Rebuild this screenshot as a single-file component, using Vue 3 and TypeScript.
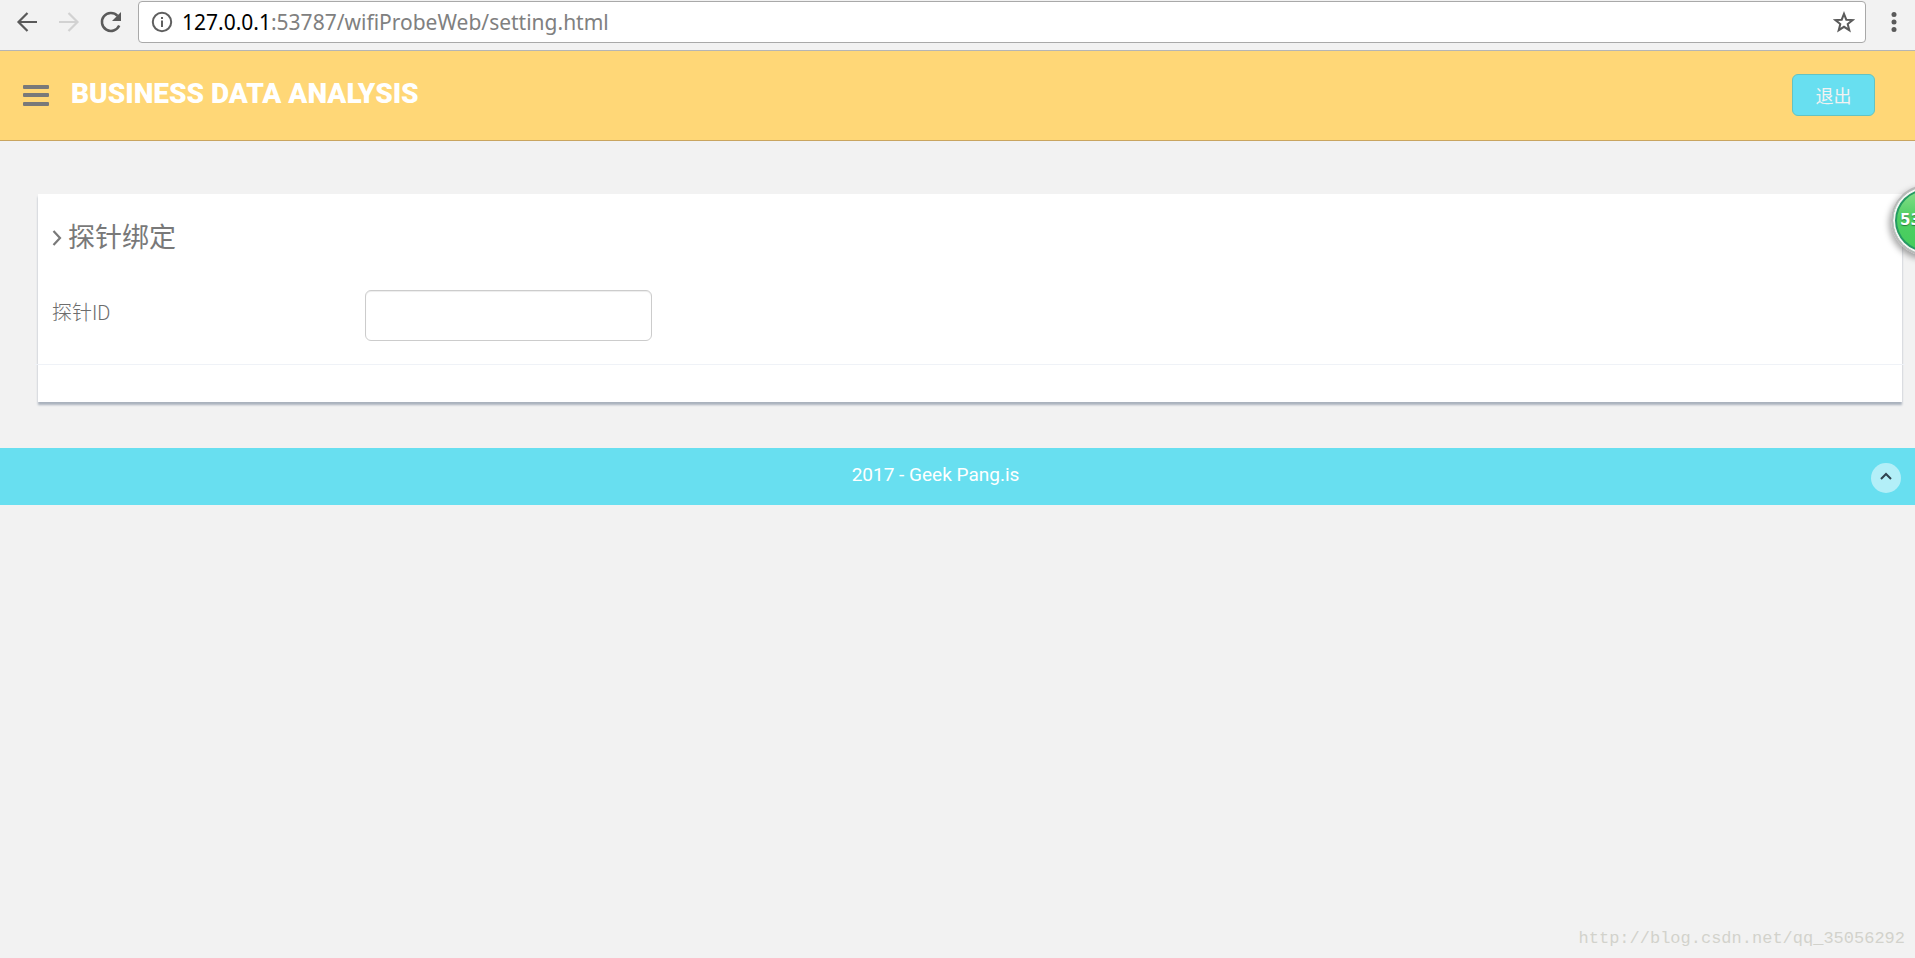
<script setup lang="ts">
import { ref } from 'vue'

const host = '127.0.0.1'
const path = ':53787/wifiProbeWeb/setting.html'
const probeId = ref('')

function scrollToTop(): void {
  window.scrollTo({ top: 0 })
}
</script>

<template>
  <div class="screen">
    <div class="toolbar">
      <button class="tool" type="button" aria-label="Back">
        <svg width="24" height="24" viewBox="0 0 24 24"><path d="M22 12H4M12.5 3L3.5 12l9 9" fill="none" stroke="#5a5a5a" stroke-width="2.2" /></svg>
      </button>
      <button class="tool" type="button" aria-label="Forward">
        <svg width="24" height="24" viewBox="0 0 24 24"><path d="M2 12h18M11.500 3l9 9-9 9" fill="none" stroke="#d2d2d2" stroke-width="2.2" /></svg>
      </button>
      <button class="tool" type="button" aria-label="Reload">
        <svg width="24" height="24" viewBox="0 0 24 24">
          <path d="M20.200 15.500A9 9 0 1 1 18.500 5.800" fill="none" stroke="#5a5a5a" stroke-width="2.500" />
          <path d="M22 2v9h-9z" fill="#5a5a5a" />
        </svg>
      </button>
      <div class="address">
        <svg class="info" width="22" height="22" viewBox="0 0 22 22">
          <circle cx="11" cy="11" r="9.200" fill="none" stroke="#5f5f5f" stroke-width="2" />
          <path d="M10 9.500h2V16h-2zM10 6h2v2h-2z" fill="#5f5f5f" />
        </svg>
        <span class="url"><span class="host">{{ host }}</span>{{ path }}</span>
        <button class="star" type="button" aria-label="Bookmark">
          <svg width="22" height="22" viewBox="0 0 22 22"><path d="M11 2.800l2.300 5.900 6.300.4-4.900 4 1.600 6.100-5.300-3.400-5.300 3.400 1.600-6.100-4.900-4 6.300-.4z" fill="none" stroke="#5a5a5a" stroke-width="2" /></svg>
        </button>
      </div>
      <button class="more" type="button" aria-label="Menu">
        <svg width="6" height="22" viewBox="0 0 6 22" fill="#5a5a5a"><circle cx="3" cy="3.500" r="2.500" /><circle cx="3" cy="11" r="2.500" /><circle cx="3" cy="18.500" r="2.500" /></svg>
      </button>
    </div>

    <header class="header">
      <button class="bars" type="button" aria-label="Toggle navigation">
        <svg width="26" height="21" viewBox="0 0 26 21" fill="#797979"><rect width="26" height="4" rx="1" /><rect y="8" width="26" height="4" rx="1" /><rect y="17" width="26" height="4" rx="1" /></svg>
      </button>
      <a class="logo" href="#">BUSINESS DATA ANALYSIS</a>
      <button class="logout" type="button">退出</button>
    </header>

    <main class="content">
      <form class="panel" @submit.prevent>
        <h4 class="title">
          <svg width="10" height="18" viewBox="0 0 10 18"><path d="M1.500 2l6.500 7-6.500 7" fill="none" stroke="#797979" stroke-width="2.200" /></svg>
          探针绑定
        </h4>
        <div class="row">
          <label for="probe">探针ID</label>
          <input id="probe" v-model="probeId" type="text" />
        </div>
      </form>
    </main>

    <footer class="footer">
      <span class="copy">2017 - Geek Pang.is</span>
      <button class="top" type="button" aria-label="Back to top" @click="scrollToTop">
        <svg width="12" height="8" viewBox="0 0 12 8"><path d="M1 7l5-5 5 5" fill="none" stroke="#2f4350" stroke-width="2" /></svg>
      </button>
    </footer>

    <div class="ball"><span>53%</span></div>
    <div class="mark">http://blog.csdn.net/qq_35056292</div>
  </div>
</template>

<style>
body {
  background: #f2f2f2;
}
</style>

<style scoped>
.screen {
  position: relative;
  min-height: 100vh;
  overflow: hidden;
  color: #797979;
  font-family: Roboto, "Noto Sans CJK SC", sans-serif;
}
.screen * {
  box-sizing: border-box;
}
button {
  padding: 0;
  border: 0;
  background: none;
  font-family: inherit;
}
svg {
  display: block;
}
.toolbar {
  display: flex;
  align-items: center;
  height: 51px;
  padding: 0 18px 6px 15px;
  border-bottom: 1px solid #b5b5b5;
}
.tool {
  margin-right: 18px;
}
.tool:nth-child(3) {
  margin-right: 15px;
}
.address {
  display: flex;
  flex: 1;
  align-items: center;
  height: 42px;
  padding: 0 10px 0 12px;
  border: 1px solid #a9a9a9;
  border-radius: 4px;
  background: #fff;
}
.url {
  flex: 1;
  margin-left: 9px;
  color: #808080;
  font: 21px/30px "Noto Sans", sans-serif;
}
.host {
  color: #000;
}
.more {
  margin-left: 25px;
}
.header {
  display: flex;
  align-items: center;
  height: 90px;
  padding: 0 40px 1px 23px;
  border-bottom: 1px solid #c9a560;
  background: #ffd777;
}
.logo {
  padding-bottom: 2px;
  margin-left: 22px;
  color: #fff;
  font: 900 28px/40px Roboto, sans-serif;
  text-decoration: none;
}
.logout {
  width: 83px;
  height: 42px;
  margin-left: auto;
  border: 1px solid #64c3c2;
  border-radius: 6px;
  background: #68dff0;
  color: #f2f2f2;
  font-size: 18px;
}
.content {
  padding: 53px 13px 46px 38px;
}
.panel {
  padding: 24px 0 37px 14px;
  background: #fff;
  box-shadow: 0 3px 2px #aab2bd;
}
.title {
  display: flex;
  align-items: center;
  gap: 6px;
  margin: 0 0 32px;
  font-size: 27px;
  font-weight: 400;
  line-height: 40px;
}
.row {
  display: grid;
  grid-template-columns: repeat(6, 1fr);
  gap: 27px;
  margin: 0 -3px 0 -17px;
  padding: 0 0 23px 17px;
  border-bottom: 1px solid #eff2f7;
}
.row label {
  color: #6c6c6c;
  font-size: 20px;
  font-weight: 300;
  line-height: 47px;
}
.row input {
  width: 100%;
  height: 51px;
  padding: 8px 16px;
  border: 1px solid #ccc;
  border-radius: 6px;
  background: #fff;
  box-shadow: inset 0 1px 1px rgba(0, 0, 0, 0.075);
  font-size: 18px;
}
.footer {
  display: flex;
  align-items: center;
  height: 57px;
  padding-right: 14px;
  background: #68dff0;
}
.copy {
  flex: 1;
  padding-bottom: 3px;
  color: #fff;
  font-size: 19px;
  line-height: 30px;
  text-align: center;
}
.top {
  display: flex;
  align-items: center;
  justify-content: center;
  width: 30px;
  height: 30px;
  padding-bottom: 4px;
  margin-top: 3px;
  border-radius: 50%;
  background: #b3eff8;
}
.ball {
  position: absolute;
  top: 185px;
  right: -47px;
  width: 71px;
  height: 71px;
  padding: 21px 0 0 7px;
  border: 2px solid #b9b9b9;
  border-radius: 50%;
  background: linear-gradient(#8fe08f, #4fcf64 45%, #43cc5a) padding-box;
  box-shadow: inset 0 0 0 2px #f4f4f4, inset 0 0 0 4px #259a62, -2px 3px 6px rgba(0, 0, 0, 0.35);
  color: #fff;
  font: bold 15px/24px "DejaVu Sans", sans-serif;
  text-shadow: 0 1px 1px #287a3c;
}
.mark {
  position: absolute;
  right: 10px;
  bottom: 7px;
  color: #d2d2cc;
  font: 17px/24px "Liberation Mono", monospace;
}
</style>
